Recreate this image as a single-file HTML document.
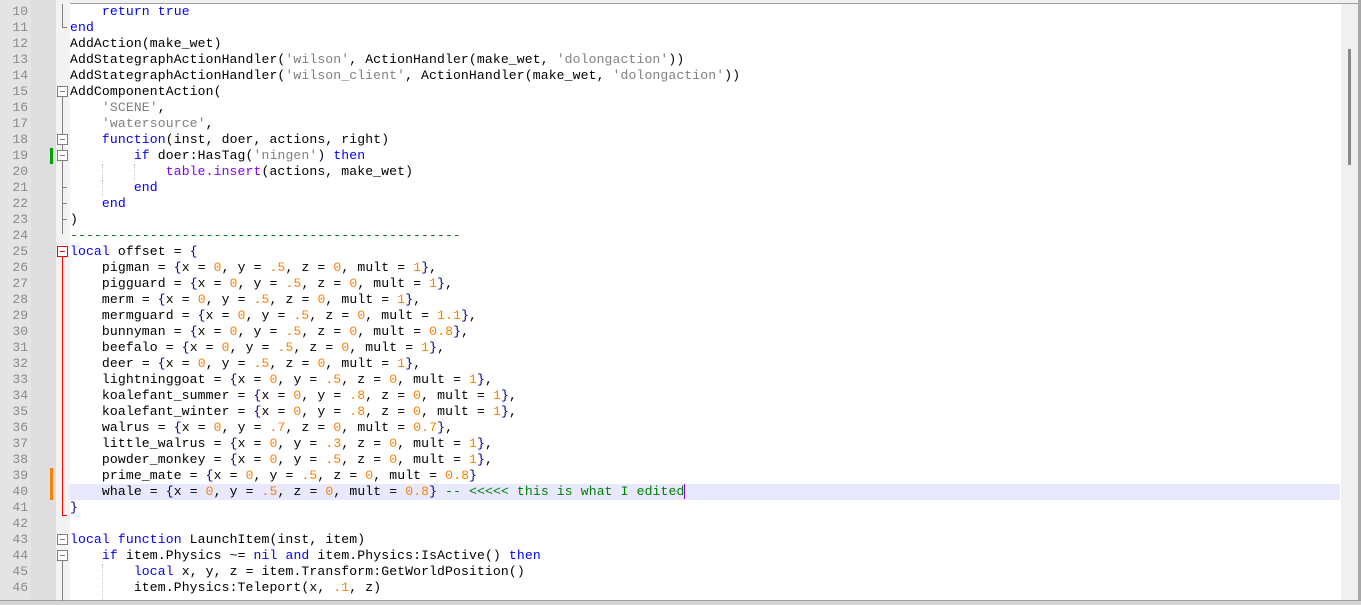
<!DOCTYPE html>
<html><head><meta charset="utf-8"><style>
body{margin:0;width:1361px;height:604px;overflow:hidden;background:#fff;position:relative;font-family:"Liberation Mono",monospace;font-size:13.1px}
.g1{position:absolute;left:0;top:0;width:31px;height:604px;background:#e4e4e4}
.g2{position:absolute;left:31px;top:0;width:25px;height:604px;background:#dedede}
.g3{position:absolute;left:56px;top:0;width:14px;height:604px;background:#f3f3f3}
.ln{position:absolute;left:0;width:28px;text-align:right;color:#8a8a8a;height:16px;line-height:16px;font-size:13px}
.t{position:absolute;left:70px;height:16px;line-height:16px;white-space:pre;color:#000;letter-spacing:0.12px}
b{color:#000;font-weight:normal}
b.br{color:#000080}
i{font-style:normal;color:#ff8000}
u{text-decoration:none;color:#808080}
em{font-style:normal;color:#0000ff}
s{text-decoration:none;color:#008000}
var{font-style:normal;color:#8000ff}
.box{position:absolute;left:57px;width:9px;height:9px;border:1px solid #808080;background:#fff}
.box:after{content:"";position:absolute;left:2px;top:4px;width:5px;height:1px;background:#808080}
.box.r{border-color:#f00}.box.r:after{background:#f00}
.vl{position:absolute;left:62px;width:1px;background:#808080}
.vl.r{background:#f00}
.hl{position:absolute;left:62px;width:5px;height:1px;background:#808080}
.hl.r{background:#f00}
.ig{position:absolute;width:0;border-left:1px dotted #c0c0c0}
</style></head><body>
<div style="position:absolute;left:0;top:0;width:1361px;height:3px;background:#f0f0f0;border-bottom:1px solid #a0a0a0"></div>
<div class="g1"></div><div class="g2"></div><div class="g3"></div>
<div style="position:absolute;left:70px;top:484px;width:1270px;height:16px;background:#e8e8ff"></div>
<div style="position:absolute;left:1341px;top:4px;width:17px;height:596px;background:#f0f0f0"></div>
<div style="position:absolute;left:1348px;top:49px;width:3px;height:116px;background:#8a8a8a"></div>
<div style="position:absolute;left:1358px;top:0;width:3px;height:604px;background:#a8a8a8"></div>
<div style="position:absolute;left:0;top:600px;width:1361px;height:4px;background:#d4d4d4;border-top:1px solid #a0a0a0"></div>

<div style="position:absolute;left:50px;top:148px;width:3px;height:16px;background:#00a000"></div>
<div style="position:absolute;left:50px;top:468px;width:3px;height:32px;background:#ff8000"></div>

<div class="vl" style="top:4px;height:23px"></div><div class="hl" style="top:27px"></div>
<div class="box" style="top:86px"></div>
<div class="vl" style="top:97px;height:137px"></div>
<div class="box" style="top:134px"></div>
<div class="box" style="top:150px"></div>
<div class="hl" style="top:187px"></div><div class="hl" style="top:203px"></div><div class="hl" style="top:219px"></div>
<div class="box r" style="top:246px"></div>
<div class="vl r" style="top:257px;height:258px"></div><div class="hl r" style="top:515px"></div>
<div class="box" style="top:534px"></div>
<div class="box" style="top:550px"></div>
<div class="vl" style="top:561px;height:40px"></div>

<div class="ig" style="left:102px;top:164px;height:16px"></div>
<div class="ig" style="left:134px;top:164px;height:16px"></div>
<div class="ig" style="left:102px;top:180px;height:16px"></div>
<div class="ig" style="left:102px;top:564px;height:36px"></div>

<div class="ln" style="top:4px">10</div><div class="t" style="top:4px">    <em>return</em> <em>true</em></div>
<div class="ln" style="top:20px">11</div><div class="t" style="top:20px"><em>end</em></div>
<div class="ln" style="top:36px">12</div><div class="t" style="top:36px">AddAction<b>(</b>make_wet<b>)</b></div>
<div class="ln" style="top:52px">13</div><div class="t" style="top:52px">AddStategraphActionHandler<b>(</b><u>'wilson'</u><b>,</b> ActionHandler<b>(</b>make_wet<b>,</b> <u>'dolongaction'</u><b>))</b></div>
<div class="ln" style="top:68px">14</div><div class="t" style="top:68px">AddStategraphActionHandler<b>(</b><u>'wilson_client'</u><b>,</b> ActionHandler<b>(</b>make_wet<b>,</b> <u>'dolongaction'</u><b>))</b></div>
<div class="ln" style="top:84px">15</div><div class="t" style="top:84px">AddComponentAction<b>(</b></div>
<div class="ln" style="top:100px">16</div><div class="t" style="top:100px">    <u>'SCENE'</u><b>,</b></div>
<div class="ln" style="top:116px">17</div><div class="t" style="top:116px">    <u>'watersource'</u><b>,</b></div>
<div class="ln" style="top:132px">18</div><div class="t" style="top:132px">    <em>function</em><b>(</b>inst<b>,</b> doer<b>,</b> actions<b>,</b> right<b>)</b></div>
<div class="ln" style="top:148px">19</div><div class="t" style="top:148px">        <em>if</em> doer<b>:</b>HasTag<b>(</b><u>'ningen'</u><b>)</b> <em>then</em></div>
<div class="ln" style="top:164px">20</div><div class="t" style="top:164px">            <var>table.insert</var><b>(</b>actions<b>,</b> make_wet<b>)</b></div>
<div class="ln" style="top:180px">21</div><div class="t" style="top:180px">        <em>end</em></div>
<div class="ln" style="top:196px">22</div><div class="t" style="top:196px">    <em>end</em></div>
<div class="ln" style="top:212px">23</div><div class="t" style="top:212px"><b>)</b></div>
<div class="ln" style="top:228px">24</div><div class="t" style="top:228px"><s>-------------------------------------------------</s></div>
<div class="ln" style="top:244px">25</div><div class="t" style="top:244px"><em>local</em> offset <b>=</b> <b class="br">{</b></div>
<div class="ln" style="top:260px">26</div><div class="t" style="top:260px">    pigman <b>=</b> <b class="br">{</b>x <b>=</b> <i>0</i><b>,</b> y <b>=</b> <i>.5</i><b>,</b> z <b>=</b> <i>0</i><b>,</b> mult <b>=</b> <i>1</i><b class="br">}</b>,</div>
<div class="ln" style="top:276px">27</div><div class="t" style="top:276px">    pigguard <b>=</b> <b class="br">{</b>x <b>=</b> <i>0</i><b>,</b> y <b>=</b> <i>.5</i><b>,</b> z <b>=</b> <i>0</i><b>,</b> mult <b>=</b> <i>1</i><b class="br">}</b>,</div>
<div class="ln" style="top:292px">28</div><div class="t" style="top:292px">    merm <b>=</b> <b class="br">{</b>x <b>=</b> <i>0</i><b>,</b> y <b>=</b> <i>.5</i><b>,</b> z <b>=</b> <i>0</i><b>,</b> mult <b>=</b> <i>1</i><b class="br">}</b>,</div>
<div class="ln" style="top:308px">29</div><div class="t" style="top:308px">    mermguard <b>=</b> <b class="br">{</b>x <b>=</b> <i>0</i><b>,</b> y <b>=</b> <i>.5</i><b>,</b> z <b>=</b> <i>0</i><b>,</b> mult <b>=</b> <i>1.1</i><b class="br">}</b>,</div>
<div class="ln" style="top:324px">30</div><div class="t" style="top:324px">    bunnyman <b>=</b> <b class="br">{</b>x <b>=</b> <i>0</i><b>,</b> y <b>=</b> <i>.5</i><b>,</b> z <b>=</b> <i>0</i><b>,</b> mult <b>=</b> <i>0.8</i><b class="br">}</b>,</div>
<div class="ln" style="top:340px">31</div><div class="t" style="top:340px">    beefalo <b>=</b> <b class="br">{</b>x <b>=</b> <i>0</i><b>,</b> y <b>=</b> <i>.5</i><b>,</b> z <b>=</b> <i>0</i><b>,</b> mult <b>=</b> <i>1</i><b class="br">}</b>,</div>
<div class="ln" style="top:356px">32</div><div class="t" style="top:356px">    deer <b>=</b> <b class="br">{</b>x <b>=</b> <i>0</i><b>,</b> y <b>=</b> <i>.5</i><b>,</b> z <b>=</b> <i>0</i><b>,</b> mult <b>=</b> <i>1</i><b class="br">}</b>,</div>
<div class="ln" style="top:372px">33</div><div class="t" style="top:372px">    lightninggoat <b>=</b> <b class="br">{</b>x <b>=</b> <i>0</i><b>,</b> y <b>=</b> <i>.5</i><b>,</b> z <b>=</b> <i>0</i><b>,</b> mult <b>=</b> <i>1</i><b class="br">}</b>,</div>
<div class="ln" style="top:388px">34</div><div class="t" style="top:388px">    koalefant_summer <b>=</b> <b class="br">{</b>x <b>=</b> <i>0</i><b>,</b> y <b>=</b> <i>.8</i><b>,</b> z <b>=</b> <i>0</i><b>,</b> mult <b>=</b> <i>1</i><b class="br">}</b>,</div>
<div class="ln" style="top:404px">35</div><div class="t" style="top:404px">    koalefant_winter <b>=</b> <b class="br">{</b>x <b>=</b> <i>0</i><b>,</b> y <b>=</b> <i>.8</i><b>,</b> z <b>=</b> <i>0</i><b>,</b> mult <b>=</b> <i>1</i><b class="br">}</b>,</div>
<div class="ln" style="top:420px">36</div><div class="t" style="top:420px">    walrus <b>=</b> <b class="br">{</b>x <b>=</b> <i>0</i><b>,</b> y <b>=</b> <i>.7</i><b>,</b> z <b>=</b> <i>0</i><b>,</b> mult <b>=</b> <i>0.7</i><b class="br">}</b>,</div>
<div class="ln" style="top:436px">37</div><div class="t" style="top:436px">    little_walrus <b>=</b> <b class="br">{</b>x <b>=</b> <i>0</i><b>,</b> y <b>=</b> <i>.3</i><b>,</b> z <b>=</b> <i>0</i><b>,</b> mult <b>=</b> <i>1</i><b class="br">}</b>,</div>
<div class="ln" style="top:452px">38</div><div class="t" style="top:452px">    powder_monkey <b>=</b> <b class="br">{</b>x <b>=</b> <i>0</i><b>,</b> y <b>=</b> <i>.5</i><b>,</b> z <b>=</b> <i>0</i><b>,</b> mult <b>=</b> <i>1</i><b class="br">}</b>,</div>
<div class="ln" style="top:468px">39</div><div class="t" style="top:468px">    prime_mate <b>=</b> <b class="br">{</b>x <b>=</b> <i>0</i><b>,</b> y <b>=</b> <i>.5</i><b>,</b> z <b>=</b> <i>0</i><b>,</b> mult <b>=</b> <i>0.8</i><b class="br">}</b></div>
<div class="ln" style="top:484px">40</div><div class="t" style="top:484px">    whale <b>=</b> <b class="br">{</b>x <b>=</b> <i>0</i><b>,</b> y <b>=</b> <i>.5</i><b>,</b> z <b>=</b> <i>0</i><b>,</b> mult <b>=</b> <i>0.8</i><b class="br">}</b> <s>-- &lt;&lt;&lt;&lt;&lt; this is what I edited</s><span style="display:inline-block;width:1px;height:15px;background:#8000ff;vertical-align:top"></span></div>
<div class="ln" style="top:500px">41</div><div class="t" style="top:500px"><b class="br">}</b></div>
<div class="ln" style="top:516px">42</div>
<div class="ln" style="top:532px">43</div><div class="t" style="top:532px"><em>local</em> <em>function</em> LaunchItem<b>(</b>inst<b>,</b> item<b>)</b></div>
<div class="ln" style="top:548px">44</div><div class="t" style="top:548px">    <em>if</em> item<b>.</b>Physics <b>~=</b> <em>nil</em> <em>and</em> item<b>.</b>Physics<b>:</b>IsActive<b>()</b> <em>then</em></div>
<div class="ln" style="top:564px">45</div><div class="t" style="top:564px">        <em>local</em> x<b>,</b> y<b>,</b> z <b>=</b> item<b>.</b>Transform<b>:</b>GetWorldPosition<b>()</b></div>
<div class="ln" style="top:580px">46</div><div class="t" style="top:580px">        item<b>.</b>Physics<b>:</b>Teleport<b>(</b>x<b>,</b> <i>.1</i><b>,</b> z<b>)</b></div>
</body></html>
